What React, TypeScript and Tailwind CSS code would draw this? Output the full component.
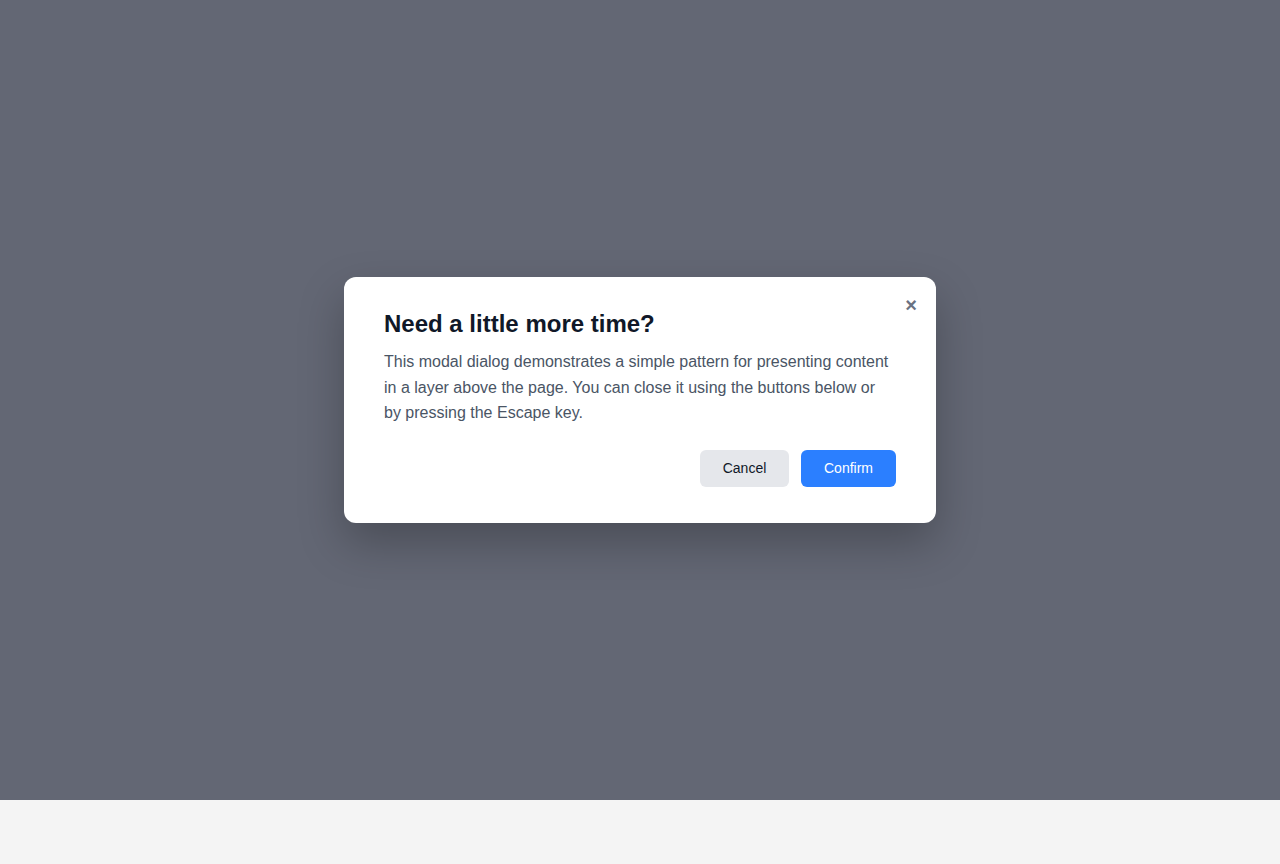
export default function App() {
  return (
    <div className="min-h-[864px] bg-[#f4f4f4] font-['Liberation_Sans',Arial,sans-serif]">
      <div className="flex h-[800px] items-center justify-center bg-[#636774]">
        <div className="relative w-[592px] rounded-xl bg-white px-10 pt-[31px] pb-9 shadow-[0_20px_45px_rgba(0,0,0,0.25)]">
          <button
            className="absolute top-[16px] right-[19px] text-[20px] leading-6 font-bold text-gray-500"
            aria-label="Close"
          >
            ×
          </button>
          <h2 className="text-2xl leading-8 font-bold text-gray-900">Need a little more time?</h2>
          <p className="mt-[9px] text-base leading-[25.5px] text-gray-600">
            This modal dialog demonstrates a simple pattern for presenting content in a layer above the page. You can close it using the buttons below or by pressing the Escape key.
          </p>
          <div className="mt-6 flex justify-end gap-3">
            <button className="h-[37px] w-[89px] rounded-md bg-gray-200 text-sm text-gray-900">Cancel</button>
            <button className="h-[37px] w-[95px] rounded-md bg-blue-500 text-sm text-white">Confirm</button>
          </div>
        </div>
      </div>
    </div>
  );
}
